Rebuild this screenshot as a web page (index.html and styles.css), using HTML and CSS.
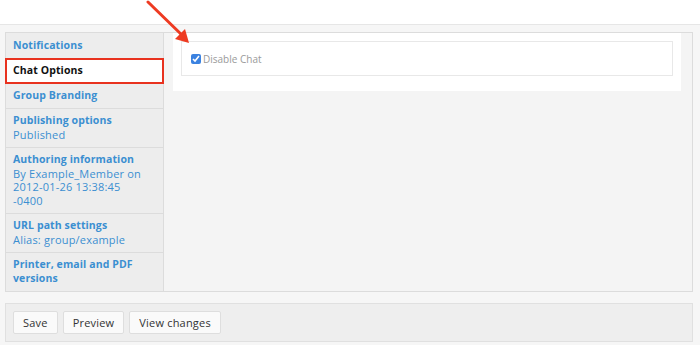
FILE: index.html
```html
<!DOCTYPE html>
<html lang="en">
<head>
  <meta charset="UTF-8" />
  <title>Chat Options</title>
  <link rel="stylesheet" href="styles.css">
</head>
<body>
  <div class="page">
    <form class="node-form">
      <div class="vtabs">
        <ul class="vtabs-list">
          <li class="tab"><a>Notifications</a></li>
          <li class="tab selected"><a>Chat Options</a></li>
          <li class="tab"><a>Group Branding</a></li>
          <li class="tab"><a>Publishing options</a><span class="summary">Published</span></li>
          <li class="tab"><a>Authoring information</a><span class="summary">By Example_Member on<br>2012-01-26 13:38:45<br>-0400</span></li>
          <li class="tab"><a>URL path settings</a><span class="summary">Alias: group/example</span></li>
          <li class="tab last"><a>Printer, email and PDF versions</a></li>
        </ul>
        <div class="vtabs-pane">
          <div class="panel">
            <fieldset class="field">
              <label class="check"><input type="checkbox" checked> Disable Chat</label>
            </fieldset>
          </div>
        </div>
      </div>

      <div class="actions">
        <button type="button">Save</button>
        <button type="button">Preview</button>
        <button type="button">View changes</button>
      </div>
    </form>

    <!-- annotation arrow -->
    <svg class="arrow" width="60" height="50" viewBox="0 0 60 50">
      <line x1="3" y1="2" x2="40" y2="38" stroke="#ee3b22" stroke-width="3" stroke-linecap="round"/>
      <polygon points="44,43 30,39 40,29" fill="#ee3b22"/>
    </svg>
  </div>
</body>
</html>
```

FILE: styles.css
```css
body {
  margin: 0;
  background: #ffffff;
  font-family: "Open Sans", "DejaVu Sans", sans-serif;
  font-size: 10.5px;
}

.page {
  position: relative;
  padding-top: 24px;
}

.node-form {
  background: #f6f6f6;
  border-top: 1px solid #e6e6e6;
  padding: 7px 7px 5px 5px;
}

/* VERTICAL TABS */
.vtabs {
  display: flex;
  border: 1px solid #dcdcdc;
  border-left: none;
}

.vtabs-list {
  list-style: none;
  margin: 0;
  padding: 0;
  width: 157px;
  background: #ededed;
  border-right: 1px solid #dcdcdc;
  border-left: 1px solid #dcdcdc;
}

.tab {
  padding: 5.5px 20px 5.5px 7px;
  line-height: 13.5px;
  border-bottom: 1px solid #dcdcdc;
}

.tab.last {
  border-bottom: none;
}

.tab a {
  display: block;
  color: #3b8fd1;
  font-weight: 700;
  letter-spacing: 0.1px;
}

.tab .summary {
  display: block;
  color: #3b8fd1;
  font-size: 11px;
  letter-spacing: 0.2px;
}

.tab.selected {
  background: #ffffff;
  border: 2px solid #e8321f;
  margin: -1px;
  padding: 4.5px 6px;
  position: relative;
}

.tab.selected a {
  color: #111111;
}

.vtabs-pane {
  flex: 1;
  background: #f4f4f4;
  padding: 0 11px 0 9px;
}

.panel {
  background: #ffffff;
  padding: 8px 8px 15px 8px;
}

.field {
  margin: 0;
  border: 1px solid #e8e8e8;
  padding: 11px 9px 10px;
}

.check {
  color: #9a9a9a;
  font-size: 10px;
  line-height: 12px;
  display: flex;
  align-items: center;
  gap: 2px;
}

.check input {
  margin: 0;
  width: 10px;
  height: 10px;
  accent-color: #3b82e0;
}

/* ACTIONS */
.actions {
  margin-top: 11px;
  background: #eeeeee;
  border: 1px solid #e0e0e0;
  padding: 7px;
  display: flex;
  gap: 5px;
}

.actions button {
  font-family: inherit;
  font-size: 11px;
  letter-spacing: 0.2px;
  color: #333333;
  background: #fafafa;
  border: 1px solid #dedede;
  border-radius: 2px;
  padding: 0 9px;
  height: 23px;
}

.arrow {
  position: absolute;
  left: 145px;
  top: 0;
}
```
